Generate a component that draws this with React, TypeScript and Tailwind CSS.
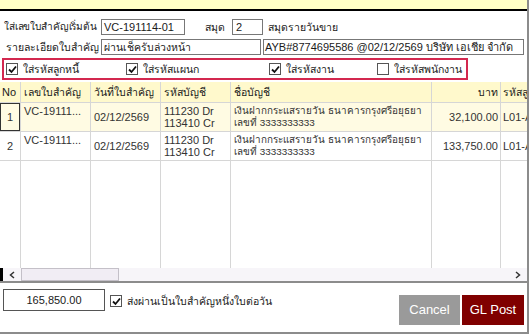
import React from "react";

const font = "font-['Tahoma','Liberation_Sans','Noto_Sans',sans-serif]";

const CheckBox = ({ checked }: { checked: boolean }) => (
  <span className="flex h-[12px] w-[12px] shrink-0 items-center justify-center border border-[#555] bg-white">
    {checked && (
      <svg width="9" height="9" viewBox="0 0 9 9">
        <path d="M1 4.5 L3.5 7 L8 1.5" fill="none" stroke="#111" strokeWidth="1.8" />
      </svg>
    )}
  </span>
);

const cols = "grid grid-cols-[21px_70px_70px_70px_201px_69px_1fr]";
const line = "border-r border-[#d6d6d6]";

const rows = [
  { no: "1", vc: "VC-19111...", date: "02/12/2569", amount: "32,100.00", bg: "bg-[#fffbe3]", sel: true },
  { no: "2", vc: "VC-19111...", date: "02/12/2569", amount: "133,750.00", bg: "bg-white", sel: false },
];

const App = () => {
  return (
    <div
      className={`flex h-[334px] w-[529px] flex-col overflow-hidden border-r-2 border-b-2 border-[#8c8c8c] bg-white text-[11px] leading-[14px] whitespace-nowrap text-[#1a1a1a] ${font}`}
    >
      <div className="h-[11px] shrink-0 border-b-2 border-black bg-[#ffffc6]" />

      {/* header fields */}
      <div className="mt-[8px] flex h-[16px] items-center">
        <span className="w-[101px] pl-[4px] text-[10.1px] tracking-[-0.15px]">ใส่เลขใบสำคัญเริ่มต้น</span>
        <div className="flex h-[16px] w-[84px] items-center border border-[#777] px-[2px]">VC-191114-01</div>
        <span className="ml-[20px] w-[27px] text-[10.5px]">สมุด</span>
        <div className="flex h-[16px] w-[31px] items-center border border-[#777] px-[3px]">2</div>
        <span className="ml-[5px] text-[10.5px]">สมุดรายวันขาย</span>
      </div>
      <div className="mt-[4px] flex h-[16px] items-center">
        <span className="w-[101px] pr-[2px] text-right text-[10.5px]">รายละเอียดใบสำคัญ</span>
        <div className="flex h-[16px] w-[160px] items-center border border-[#777] px-[2px] text-[10.5px]">
          ผ่านเช็ครับล่วงหน้า
        </div>
        <div className="ml-[2px] flex h-[16px] w-[261px] items-center overflow-hidden border border-[#777] px-[1px]">
          AYB#8774695586 @02/12/2569 บริษัท เอเชีย จำกัด
        </div>
      </div>

      <div className="mt-[3px] ml-[2px] flex h-[22px] w-[466px] items-center border-2 border-[#d3284f] text-[10.5px]">
        <div className="flex w-[122px] items-center gap-[5px] pl-[2px]">
          <CheckBox checked />
          <span>ใส่รหัสลูกหนี้</span>
        </div>
        <div className="flex w-[143px] items-center gap-[5px]">
          <CheckBox checked />
          <span>ใส่รหัสแผนก</span>
        </div>
        <div className="flex w-[108px] items-center gap-[5px]">
          <CheckBox checked />
          <span>ใส่รหัสงาน</span>
        </div>
        <div className="flex items-center gap-[5px]">
          <CheckBox checked={false} />
          <span>ใส่รหัสพนักงาน</span>
        </div>
      </div>

      {/* grid */}
      <div className="mt-[2px] flex h-[186px] flex-col">
        <div className={`${cols} h-[21px] shrink-0 border-b border-[#d6d6d6] bg-[#fff9cc] text-[10.5px]`}>
          <div className={`flex items-center ${line} pl-[2px] text-[11px]`}>No</div>
          <div className={`flex items-center overflow-hidden ${line} pl-[3px]`}>เลขใบสำคัญ</div>
          <div className={`flex items-center overflow-hidden ${line} pl-[3px]`}>วันที่ใบสำคัญ</div>
          <div className={`flex items-center overflow-hidden ${line} pl-[3px]`}>รหัสบัญชี</div>
          <div className={`flex items-center ${line} pl-[3px]`}>ชื่อบัญชี</div>
          <div className={`flex items-center justify-end ${line} pr-[2px]`}>บาท</div>
          <div className="flex items-center overflow-hidden pl-[2px]">รหัสลูกหนี้</div>
        </div>
        {rows.map((r) => (
          <div key={r.no} className={`${cols} h-[29px] shrink-0 border-b border-[#d6d6d6] leading-[12px] text-[#333] ${r.bg}`}>
            <div className={`flex items-center ${line}`}>
              <div
                className={`flex h-full w-full items-center justify-center ${
                  r.sel ? "border border-[#333]" : ""
                }`}
              >
                {r.no}
              </div>
            </div>
            <div className={`overflow-hidden ${line} pt-[2px] pl-[3px]`}>{r.vc}</div>
            <div className={`flex items-center ${line} pl-[3px]`}>{r.date}</div>
            <div className={`flex flex-col justify-center ${line} pl-[3px]`}>
              <span>111230 Dr</span>
              <span>113410 Cr</span>
            </div>
            <div className={`flex flex-col justify-center overflow-hidden ${line} pl-[3px] text-[9.9px]`}>
              <span>เงินฝากกระแสรายวัน ธนาคารกรุงศรีอยุธยา</span>
              <span>เลขที่ 3333333333</span>
            </div>
            <div className={`flex items-center justify-end ${line} pr-[2px]`}>{r.amount}</div>
            <div className="flex items-center overflow-hidden pl-[2px]">L01-A</div>
          </div>
        ))}
        <div className={`${cols} flex-1`}>
          <div className={line} />
          <div className={line} />
          <div className={line} />
          <div className={line} />
          <div className={line} />
          <div className={line} />
          <div />
        </div>
      </div>

      {/* horizontal scrollbar */}
      <div className="flex h-[15px] shrink-0 items-stretch border-b-2 border-[#8c8c8c] bg-[#f7f5f9]">
        <div className="w-[3px] bg-black" />
        <div className="flex w-[18px] items-center justify-center">
          <svg width="6" height="8" viewBox="0 0 6 8">
            <path d="M5 1 L1.5 4 L5 7" fill="none" stroke="#333" strokeWidth="1.5" />
          </svg>
        </div>
        <div className="w-[98px] border border-[#c4c0c8] bg-[#f1edf4]" />
        <div className="flex-1" />
        <div className="flex w-[18px] items-center justify-center">
          <svg width="6" height="8" viewBox="0 0 6 8">
            <path d="M1 1 L4.5 4 L1 7" fill="none" stroke="#333" strokeWidth="1.5" />
          </svg>
        </div>
      </div>

      {/* footer */}
      <div className="flex flex-1 items-start">
        <div className="mt-[6px] ml-[3px] flex h-[22px] w-[102px] items-center justify-center border border-[#555]">
          165,850.00
        </div>
        <div className="mt-[11px] ml-[5px] flex items-center gap-[5px] text-[10.5px]">
          <CheckBox checked />
          <span>ส่งผ่านเป็นใบสำคัญหนึ่งใบต่อวัน</span>
        </div>
        <div className="mt-[12px] ml-auto mr-[3px] flex gap-[2px]">
          <button className="flex h-[30px] w-[61px] items-center justify-center bg-[#9a9a9a] text-[13px] text-white">
            Cancel
          </button>
          <button className="flex h-[30px] w-[62px] items-center justify-center bg-[#800000] text-[13px] text-white">
            GL Post
          </button>
        </div>
      </div>
    </div>
  );
};

export default App;
